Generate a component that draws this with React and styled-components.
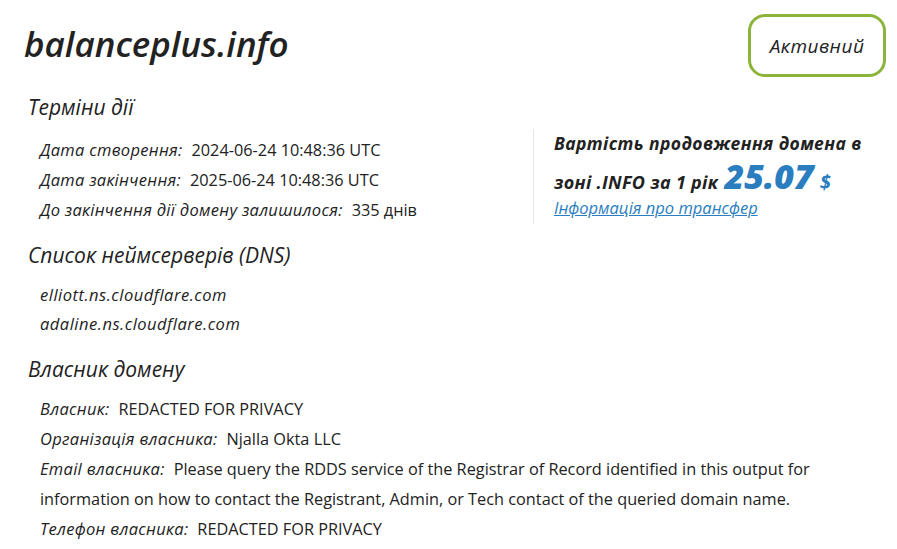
import React from "react";
import styled, { createGlobalStyle } from "styled-components";

const Global = createGlobalStyle`
  html, body { margin: 0; padding: 0; background: #fff; }
  body { font-family: "Open Sans", "Noto Sans", sans-serif; color: #222; }
`;

const Page = styled.div`
  width: 897px;
  box-sizing: border-box;
  padding: 14px 11px 0 24px;
`;

const Header = styled.div`
  display: flex;
  justify-content: space-between;
  align-items: flex-start;
`;

const Title = styled.h1`
  margin: 10px 0 0;
  font-size: 35px;
  font-style: italic;
  font-weight: 600;
  letter-spacing: 0;
  line-height: 40px;
  color: #222;
`;

const Badge = styled.div`
  box-sizing: border-box;
  width: 138px;
  height: 63px;
  border: 3px solid #8cb43a;
  border-radius: 17px;
  display: flex;
  align-items: center;
  justify-content: center;
  font-size: 19px;
  font-style: italic;
  font-weight: 500;
  letter-spacing: 0.5px;
  color: #222;
`;

const TopRow = styled.div`
  display: flex;
  align-items: flex-start;
  margin-top: 15px;
`;

const LeftCol = styled.div`
  width: 509px;
`;

const PriceBox = styled.div`
  margin-top: 37px;
  border-left: 1px solid #e6e6e6;
  padding: 0 0 3px 20px;
  width: 330px;
`;

const PriceTitle = styled.div`
  font-size: 17.5px;
  font-style: italic;
  font-weight: 700;
  letter-spacing: 0.4px;
  line-height: 28px;
  color: #222;
  white-space: nowrap;
`;

const PriceLine = styled.div`
  display: flex;
  align-items: baseline;
  height: 38px;
  font-size: 18px;
  font-style: italic;
  font-weight: 700;
  letter-spacing: 0.3px;
  line-height: 38px;
  color: #222;
  white-space: nowrap;
`;

const Price = styled.span`
  font-size: 34px;
  font-weight: 800;
  color: #2a7dbf;
  margin-left: 6px;
  letter-spacing: 0;
`;

const Currency = styled.span`
  font-size: 20px;
  font-weight: 700;
  color: #2a7dbf;
  margin-left: 6px;
`;

const Link = styled.a`
  display: block;
  font-size: 16.5px;
  font-style: italic;
  color: #2a7dbf;
  text-decoration: underline;
  line-height: 26px;
`;

const SectionTitle = styled.h2`
  margin: 0;
  padding-left: 4px;
  font-size: 21px;
  font-style: italic;
  font-weight: 500;
  line-height: 30px;
  color: #222;
`;

const List = styled.div`
  padding: ${(p) => p.$top ?? 13}px 0 ${(p) => p.$bottom ?? 15}px 16px;
`;

const Row = styled.div`
  font-size: 16.3px;
  line-height: 30px;
  color: #222;
  max-width: 800px;
`;

const Label = styled.span`
  font-style: italic;
  font-size: 16.5px;
  letter-spacing: 0.3px;
  margin-right: 9px;
`;

const Ns = styled.div`
  font-size: 16.5px;
  font-style: italic;
  letter-spacing: 0.5px;
  line-height: 29px;
`;

export default function App() {
  return (
    <Page>
      <Global />
      <Header>
        <Title>balanceplus.info</Title>
        <Badge>Активний</Badge>
      </Header>
      <TopRow>
        <LeftCol>
          <SectionTitle>Терміни дії</SectionTitle>
          <List>
            <Row><Label>Дата створення:</Label>2024-06-24 10:48:36 UTC</Row>
            <Row><Label>Дата закінчення:</Label>2025-06-24 10:48:36 UTC</Row>
            <Row><Label>До закінчення дії домену залишилося:</Label>335 днів</Row>
          </List>
        </LeftCol>
        <PriceBox>
          <PriceTitle>Вартість продовження домена в</PriceTitle>
          <PriceLine>
            зоні .INFO за 1 рік<Price>25.07</Price><Currency>$</Currency>
          </PriceLine>
          <Link href="#">Інформація про трансфер</Link>
        </PriceBox>
      </TopRow>
      <SectionTitle>Список неймсерверів (DNS)</SectionTitle>
      <List $top={10} $bottom={16}>
        <Ns>elliott.ns.cloudflare.com</Ns>
        <Ns>adaline.ns.cloudflare.com</Ns>
      </List>
      <SectionTitle>Власник домену</SectionTitle>
      <List $top={10}>
        <Row><Label>Власник:</Label>REDACTED FOR PRIVACY</Row>
        <Row><Label>Організація власника:</Label>Njalla Okta LLC</Row>
        <Row><Label>Email власника:</Label>Please query the RDDS service of the Registrar of Record identified in this output for information on how to contact the Registrant, Admin, or Tech contact of the queried domain name.</Row>
        <Row><Label>Телефон власника:</Label>REDACTED FOR PRIVACY</Row>
      </List>
    </Page>
  );
}
